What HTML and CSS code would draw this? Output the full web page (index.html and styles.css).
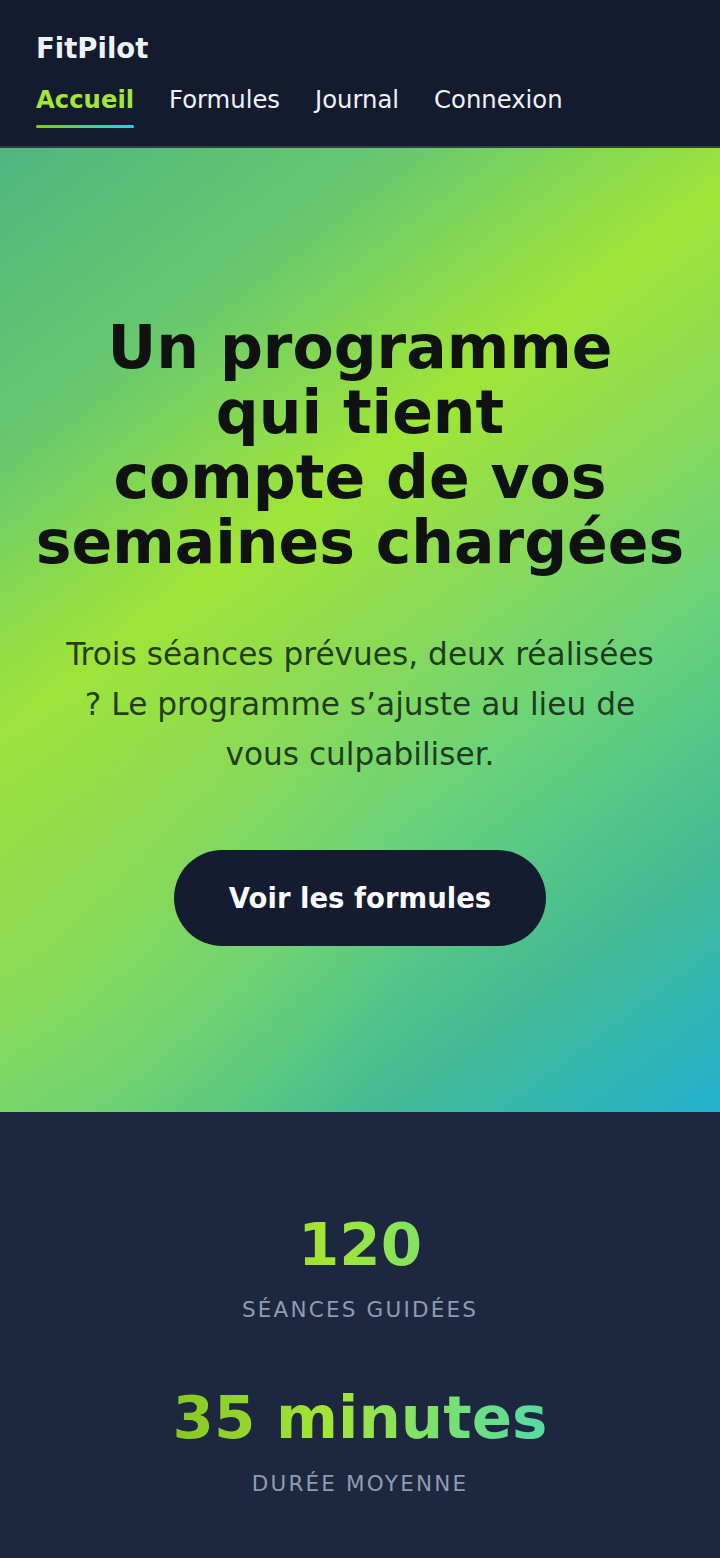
FILE: index.html
```html
<!DOCTYPE html>
<html lang="fr">
<head>
    <meta charset="UTF-8">
    <meta name="viewport" content="width=device-width, initial-scale=1.0">
    <title>FitPilot</title>
    <link rel="stylesheet" href="styles.css">
</head>
<body>
    <header class="site-header">
        <div class="brand">FitPilot</div>
        <nav class="main-nav">
            <a href="#" class="nav-link active">Accueil</a>
            <a href="#" class="nav-link">Formules</a>
            <a href="#" class="nav-link">Journal</a>
            <a href="#" class="nav-link">Connexion</a>
        </nav>
    </header>

    <main>
        <section class="hero">
            <h1 class="hero-title">Un programme qui tient<br>compte de vos semaines chargées</h1>
            <p class="hero-text">Trois séances prévues, deux réalisées ? Le programme s’ajuste au lieu de vous culpabiliser.</p>
            <a href="#" class="btn-primary">Voir les formules</a>
        </section>

        <section class="stats">
            <div class="stat">
                <div class="stat-value">120</div>
                <div class="stat-label">Séances guidées</div>
            </div>
            <div class="stat">
                <div class="stat-value">35 minutes</div>
                <div class="stat-label">Durée moyenne</div>
            </div>
        </section>
    </main>
</body>
</html>
```

FILE: styles.css
```css
body {
    margin: 0;
    font-family: "DejaVu Sans", Verdana, sans-serif;
    background-color: #1e2740;
    color: #eef2f7;
}
.site-header {
    background-color: #141b2f;
    padding: 32px 35px 18px 36px;
    border-bottom: 2px solid #2f4146;
}
.brand {
    font-size: 27.5px;
    line-height: 32px;
    font-weight: bold;
    color: #eef2f7;
}
.main-nav {
    display: flex;
    align-items: flex-start;
    gap: 35px;
    margin-top: 22px;
}
.nav-link {
    font-size: 24.3px;
    line-height: 28px;
    color: #eef2f7;
    text-decoration: none;
}
.nav-link.active {
    color: #a3e635;
    font-weight: bold;
}
.nav-link.active::after {
    content: "";
    display: block;
    height: 3px;
    margin-top: 11px;
    border-radius: 2px;
    background: linear-gradient(90deg, #84cc16, #22d3ee);
}
.hero {
    box-sizing: border-box;
    min-height: 964px;
    padding: 0 24px;
    display: flex;
    flex-direction: column;
    align-items: center;
    justify-content: center;
    text-align: center;
    background:
        radial-gradient(circle at 0% 80%, rgba(150, 222, 70, 0.5), rgba(150, 222, 70, 0) 38%),
        linear-gradient(143deg, #50b67f 0%, #66c96f 20%, #a0e537 39%, #8cdb54 51%, #68d27a 66%, #40b996 84%, #22b2cf 100%);
}
.hero-title {
    margin: 0;
    font-size: 60px;
    line-height: 65px;
    font-weight: bold;
    color: #0f1210;
    text-wrap: balance;
}
.hero-text {
    margin: 54px 0 0;
    max-width: 600px;
    font-size: 31.2px;
    line-height: 50px;
    color: rgba(12, 24, 14, 0.84);
}
.btn-primary {
    display: inline-block;
    margin-top: 71px;
    padding: 32px 55px;
    border-radius: 999px;
    background-color: #151c30;
    color: #f8fafc;
    font-size: 27.5px;
    line-height: 32px;
    font-weight: bold;
    text-decoration: none;
}
.stats {
    padding: 100px 24px;
    text-align: center;
}
.stat + .stat {
    margin-top: 63px;
}
.stat-value {
    font-size: 59.5px;
    line-height: 1.1;
    font-weight: bold;
    background: linear-gradient(90deg, #6aa815 0%, #a3e635 45%, #22d3ee 100%);
    -webkit-background-clip: text;
    background-clip: text;
    color: transparent;
}
.stat-label {
    margin-top: 20px;
    font-size: 21.5px;
    letter-spacing: 2.2px;
    text-transform: uppercase;
    color: #8f9bb1;
}
```
